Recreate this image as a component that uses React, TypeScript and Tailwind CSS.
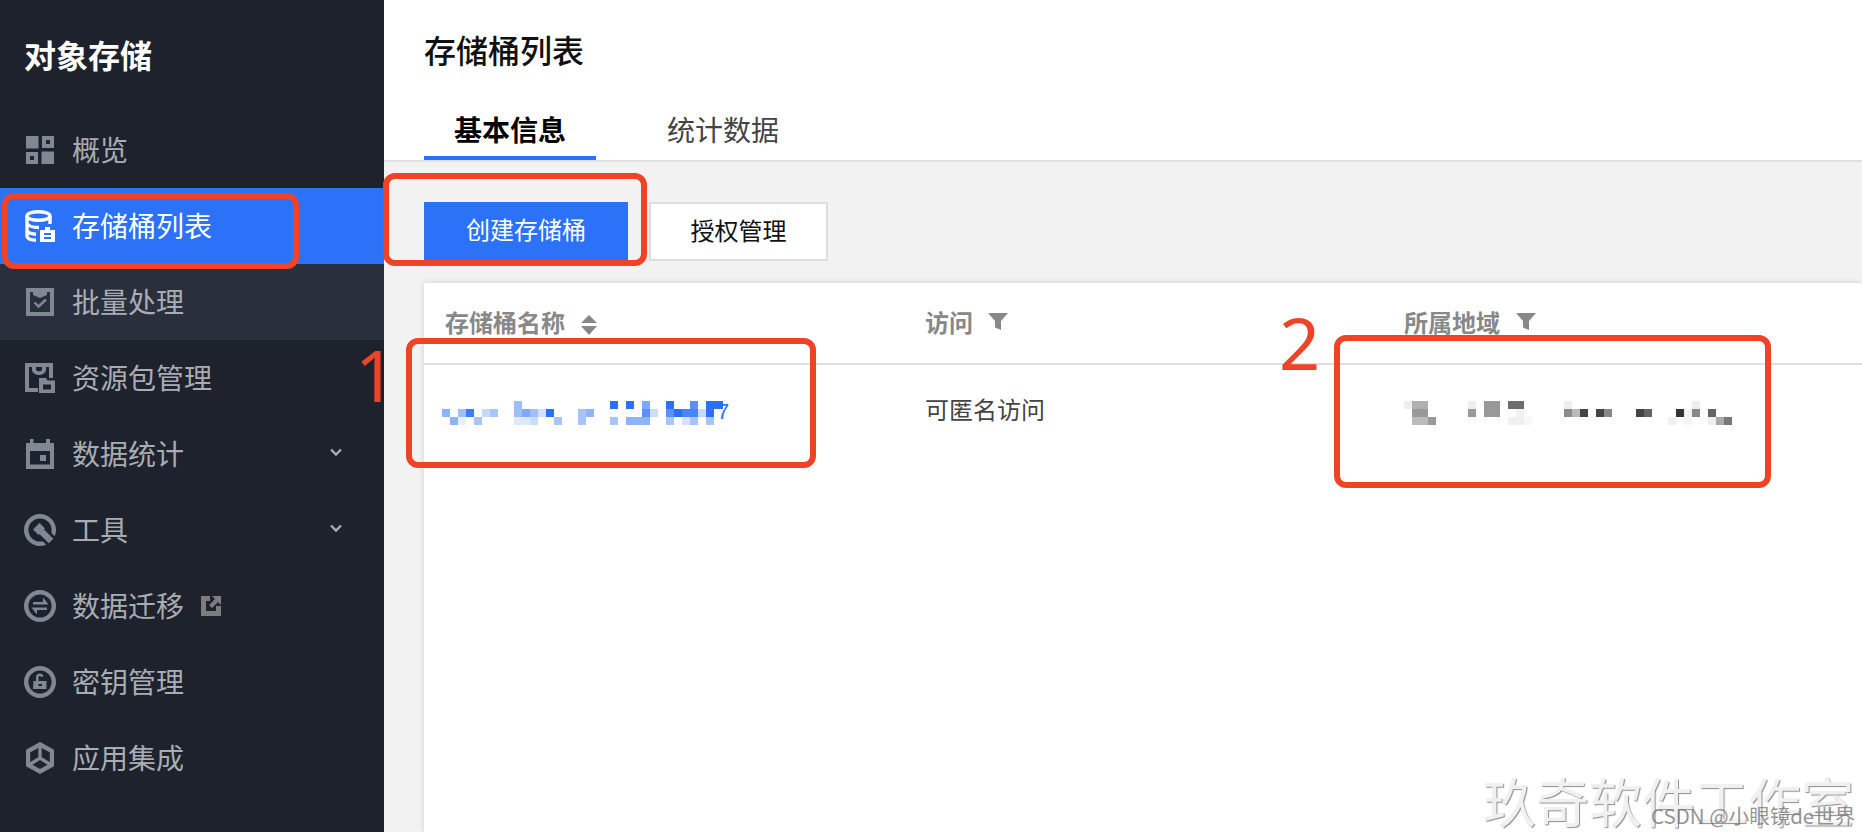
import type { ReactNode } from "react";

const cjk = { fontFamily: '"Noto Sans CJK SC", "Liberation Sans", sans-serif' };

type Cell = [number, number, number, string];

// mosaic cells: column x, row, width, colour (blurred-out bucket name / region)
const nameCells: Cell[] = [
  [72, 0, 8, "#9dbdfb"], [168, 0, 8, "#2a71f8"], [184, 0, 8, "#2a71f8"], [200, 0, 8, "#7fa8fa"],
  [224, 0, 8, "#2a71f8"], [248, 0, 8, "#5b8ff9"], [264, 0, 17, "#2a71f8"],
  [0, 1, 8, "#8fb4fb"], [16, 1, 8, "#a0bffb"], [24, 1, 8, "#3b7cf8"], [40, 1, 8, "#c8d9fd"], [48, 1, 8, "#a7c4fb"],
  [72, 1, 8, "#9dbdfb"], [80, 1, 8, "#7fa8fa"], [88, 1, 8, "#a0bffb"], [96, 1, 8, "#d5e2fd"], [104, 1, 8, "#2a71f8"],
  [136, 1, 8, "#a8c4fb"], [144, 1, 8, "#8fb4fb"], [200, 1, 8, "#5b8ff9"], [208, 1, 8, "#cddcfd"],
  [224, 1, 8, "#5b8ff9"], [232, 1, 8, "#2a71f8"], [240, 1, 16, "#4a84f9"], [256, 1, 8, "#c8d9fd"], [264, 1, 8, "#2a71f8"],
  [8, 2, 8, "#8fb4fb"], [16, 2, 8, "#e8f0fe"], [32, 2, 8, "#a7c4fb"],
  [72, 2, 16, "#dfe9fe"], [88, 2, 8, "#cddcfd"], [112, 2, 8, "#a7c4fb"],
  [136, 2, 8, "#a7c4fb"], [168, 2, 8, "#a7c4fb"], [184, 2, 24, "#8fb4fb"],
  [224, 2, 8, "#a7c4fb"], [240, 2, 8, "#d5e2fd"], [248, 2, 8, "#a7c4fb"], [264, 2, 8, "#a7c4fb"],
];

const regionCells: Cell[] = [
  [0, 0, 8, "#eeeeee"], [8, 0, 16, "#b0b0b0"], [64, 0, 8, "#eeeeee"], [80, 0, 16, "#999999"], [104, 0, 16, "#6d6d6d"],
  [160, 0, 8, "#eeeeee"], [288, 0, 8, "#eeeeee"],
  [8, 1, 16, "#999999"], [64, 1, 8, "#999999"], [80, 1, 16, "#999999"], [112, 1, 8, "#f2f2f2"],
  [160, 1, 8, "#8c8c8c"], [168, 1, 8, "#bbbbbb"], [176, 1, 8, "#444444"], [192, 1, 8, "#444444"], [200, 1, 8, "#888888"],
  [232, 1, 8, "#444444"], [240, 1, 8, "#666666"], [272, 1, 8, "#333333"], [280, 1, 8, "#f2f2f2"], [288, 1, 8, "#888888"], [304, 1, 8, "#666666"],
  [8, 2, 16, "#bbbbbb"], [24, 2, 8, "#999999"], [104, 2, 16, "#f0f0f0"], [120, 2, 8, "#f8f8f8"],
  [264, 2, 8, "#f0f0f0"], [280, 2, 8, "#f4f4f4"], [304, 2, 8, "#eeeeee"], [312, 2, 8, "#aaaaaa"], [320, 2, 8, "#777777"],
];

function Mosaic({ cells, width }: { cells: Cell[]; width: number }) {
  return (
    <svg width={width} height={24} viewBox={`0 0 ${width} 24`} className="block">
      {cells.map(([x, row, w, fill]) => (
        <rect key={`${x}-${row}`} x={x} y={row * 8} width={w} height={8} fill={fill} />
      ))}
    </svg>
  );
}

const OverviewIcon = () => (
  <svg width="28" height="28" viewBox="0 0 28 28" fill="#7f8893">
    <rect width="12.5" height="12.5" />
    <path fillRule="evenodd" d="M16 0h12v12H16zM20 4v4h4V4z" />
    <path fillRule="evenodd" d="M0 16h12v12H0zM4 20v4h4v-4z" />
    <rect x="15.5" y="15.5" width="12.5" height="12.5" />
  </svg>
);

const BucketIcon = () => (
  <svg width="30" height="32" viewBox="0 0 30 32" fill="none" stroke="#fff" strokeWidth="3.4">
    <ellipse cx="13.5" cy="6" rx="11.5" ry="4.3" />
    <path d="M2 6v20c0 2.500 4 4 9 4.200M25 6v8M2 13.500c1.500 2.500 6 4 12 4M2 21c1.500 2 4 3 9 3.300" />
    <path
      fillRule="evenodd"
      fill="#fff"
      stroke="none"
      d="M15 20h5v-3h5v3h5v12H15zM19 23v2h7v-2zM19 27v2h7v-2z"
    />
  </svg>
);

const BatchIcon = () => (
  <svg width="28" height="28" viewBox="0 0 28 28" fill="#7f8893">
    <path fillRule="evenodd" d="M0 0h28v28H0zM4 4v20h20V4h-3v3l-7 3-7-3V4z" />
    <path d="M8.500 14.500l4 4L20 11.500" fill="none" stroke="#7f8893" strokeWidth="2.400" />
  </svg>
);

const PackageIcon = () => (
  <svg width="30" height="30" viewBox="0 0 30 30" fill="#7f8893">
    <path d="M0 0h28v15h-4V4h-3v2.500c0 3-3 5.500-7 5.500S7 9.500 7 6.500V4H4v21h9v4H0z" />
    <path d="M11 4h6v2.500c0 1.200-1.500 1.800-3 1.800s-3-.6-3-1.800z" fill="#1e222d" />
    <path fillRule="evenodd" d="M14 15h7l1.500 2.500H30V30H14zM18 21.500v5h8v-5z" />
  </svg>
);

const CalendarIcon = () => (
  <svg width="28" height="30" viewBox="0 0 28 30" fill="#7f8893">
    <path fillRule="evenodd" d="M4 0h3.500v4h12.500V0h4v4h4v26H0V4h4zM4 12v13.500h20V12z" />
    <rect x="14" y="16" width="6" height="6" />
  </svg>
);

const ToolIcon = () => (
  <svg width="32" height="32" viewBox="0 0 32 32">
    <circle cx="16" cy="16" r="13.800" fill="none" stroke="#7f8893" strokeWidth="4.400" />
    <path d="M19 19L30 30" stroke="#1e222d" strokeWidth="12" />
    <path d="M15 15L27 27" stroke="#7f8893" strokeWidth="6.500" />
    <path d="M7.500 17.500L17.500 7.500l5 5L12.500 22.500z" fill="#1e222d" />
    <path d="M9 15.500L15.500 9l5.500 5.500-6.500 6.500z" fill="#7f8893" />
  </svg>
);

const MigrateIcon = () => (
  <svg width="32" height="32" viewBox="0 0 32 32" fill="#7f8893">
    <circle cx="16" cy="16" r="13.800" fill="none" stroke="#7f8893" strokeWidth="4.400" />
    <path d="M9 12h10V7.500l5.500 7H9z" />
    <path d="M7.500 17.500H23v2.500H13v4.500z" />
  </svg>
);

const KeyIcon = () => (
  <svg width="32" height="32" viewBox="0 0 32 32" fill="#7f8893">
    <circle cx="16" cy="16" r="13.800" fill="none" stroke="#7f8893" strokeWidth="4.400" />
    <path fillRule="evenodd" d="M9.500 15H12V11a3.800 3.800 0 0 1 7.500-.5l-2.500.5a1.300 1.300 0 0 0-2.500 0v4h8v8h-13.500zM14.500 18v2h3.500v-2z" />
  </svg>
);

const CubeIcon = () => (
  <svg width="28" height="32" viewBox="0 0 28 32" fill="none" stroke="#7f8893">
    <path d="M14 2.500l12 6.700v13.600l-12 6.700-12-6.700V9.200z" strokeWidth="4.400" />
    <path d="M14 3v13M14 16L3 23M14 16l11 7" strokeWidth="3.400" />
  </svg>
);

const ExternalIcon = () => (
  <svg width="20" height="20" viewBox="0 0 20 20" fill="#7d7d7d">
    <path d="M0 0h9v5H5v10h10v-5h5v10H0z" />
    <path d="M11 0h9v9l-3-3-6 6-3-3 6-6z" />
  </svg>
);

const Chevron = () => (
  <svg width="12" height="9" viewBox="0 0 12 9" fill="none" stroke="#a9adb3" strokeWidth="2.400" className="block">
    <path d="M1 1.500l5 5 5-5" />
  </svg>
);

const FilterIcon = () => (
  <svg width="20" height="18" viewBox="0 0 20 18" fill="#888">
    <path d="M0 0h20l-7 8v9l-6-2.500V8z" />
  </svg>
);

const SortIcon = () => (
  <svg width="16" height="20" viewBox="0 0 16 20" fill="#888" className="mt-[5px]">
    <path d="M8 0l8 8H0zM0 11h16l-8 9z" />
  </svg>
);

type NavEntry = { label: string; icon: ReactNode; active?: boolean; hover?: boolean; chevron?: boolean; external?: boolean };

const navItems: NavEntry[] = [
  { label: "概览", icon: <OverviewIcon /> },
  { label: "存储桶列表", icon: <BucketIcon />, active: true },
  { label: "批量处理", icon: <BatchIcon />, hover: true },
  { label: "资源包管理", icon: <PackageIcon /> },
  { label: "数据统计", icon: <CalendarIcon />, chevron: true },
  { label: "工具", icon: <ToolIcon />, chevron: true },
  { label: "数据迁移", icon: <MigrateIcon />, external: true },
  { label: "密钥管理", icon: <KeyIcon /> },
  { label: "应用集成", icon: <CubeIcon /> },
];

function NavItem({ item }: { item: NavEntry }) {
  const bg = item.active ? "bg-[#2b72f8] text-white" : item.hover ? "bg-[#292f3c] text-[#a9adb3]" : "text-[#a9adb3]";
  return (
    <div className={`flex h-[76px] items-center pl-[24px] pr-[42px] text-[28px] leading-[36px] ${bg}`}>
      <span className="flex w-[32px] justify-center">{item.icon}</span>
      <span className="ml-[16px] pb-[2px]">{item.label}</span>
      {item.external && (
        <span className="ml-[17px]">
          <ExternalIcon />
        </span>
      )}
      {item.chevron && (
        <span className="ml-auto pb-[4px]">
          <Chevron />
        </span>
      )}
    </div>
  );
}

function HeaderCell({ label, icon, gap }: { label: string; icon: ReactNode; gap: string }) {
  return (
    <div className={`flex h-[80px] items-center pb-[2px] pl-[21px] text-[24px] font-bold leading-[32px] text-[#888] ${gap}`}>
      <span>{label}</span>
      {icon}
    </div>
  );
}

export default function App() {
  return (
    <div className="relative flex h-[832px] w-full overflow-hidden bg-white" style={cjk}>
      <aside className="w-[384px] shrink-0 bg-[#1e222d]">
        <div className="flex h-[112px] items-center pb-[4px] pl-[24px] text-[32px] font-bold leading-[40px] text-white">
          对象存储
        </div>
        {navItems.map((item) => (
          <NavItem key={item.label} item={item} />
        ))}
      </aside>

      <main className="flex min-w-0 flex-1 flex-col">
        <header className="h-[162px] shrink-0 border-b-2 border-[#dfdfdf] pl-[40px]">
          <h1 className="pt-[28px] text-[32px] font-medium leading-[42px] text-[#111]">存储桶列表</h1>
          <div className="mt-[36px] flex">
            <div className="flex h-[54px] w-[172px] items-center justify-center border-b-4 border-[#2b72f8] pb-[4px] text-[28px] font-bold leading-[36px] text-black">
              基本信息
            </div>
            <div className="ml-[71px] flex h-[54px] items-center pb-[8px] text-[28px] leading-[36px] text-[#444]">
              统计数据
            </div>
          </div>
        </header>

        <section className="flex flex-1 flex-col bg-[#f2f2f2] pl-[40px] pt-[40px]">
          <div className="flex items-start">
            <button className="flex h-[58px] w-[204px] items-center justify-center bg-[#2b72f8] pb-[4px] text-[24px] leading-[32px] text-white">
              创建存储桶
            </button>
            <button className="ml-[21px] flex h-[59px] w-[179px] items-center justify-center border-2 border-[#dedede] bg-white pb-[4px] text-[24px] leading-[32px] text-[#111]">
              授权管理
            </button>
          </div>

          <div className="mt-[22px] flex-1 bg-white shadow-[0_0_6px_rgba(0,0,0,0.14)]">
            <div className="grid grid-cols-[480px_479px_1fr] border-b-2 border-[#dfdfdf]">
              <HeaderCell label="存储桶名称" gap="gap-[16px]" icon={<SortIcon />} />
              <HeaderCell label="访问" gap="gap-[15px]" icon={<FilterIcon />} />
              <HeaderCell label="所属地域" gap="gap-[16px]" icon={<FilterIcon />} />
            </div>
            <div className="grid grid-cols-[480px_479px_1fr] items-start">
              <div className="relative pl-[18px] pt-[36px]">
                <Mosaic cells={nameCells} width={290} />
                <span className="absolute left-[293px] top-[37px] text-[22px] leading-[20px] text-[#2b72f8] [font-family:'Liberation_Sans',sans-serif]">
                  7
                </span>
              </div>
              <div className="pl-[21px] pt-[28px] text-[24px] leading-[32px] text-[#444]">可匿名访问</div>
              <div className="pl-[21px] pt-[36px]">
                <Mosaic cells={regionCells} width={330} />
              </div>
            </div>
          </div>
        </section>
      </main>

      {/* red annotations drawn on top of the screenshot */}
      <div className="absolute left-[2px] top-[193px] h-[76px] w-[297px] rounded-[12px] border-[6px] border-[#ee4326]" />
      <div className="absolute left-[383px] top-[173px] h-[93px] w-[264px] rounded-[12px] border-[6px] border-[#ee4326]" />
      <div className="absolute left-[406px] top-[338px] h-[130px] w-[410px] rounded-[12px] border-[6px] border-[#ee4326]" />
      <div className="absolute left-[1334px] top-[335px] h-[153px] w-[437px] rounded-[12px] border-[6px] border-[#ee4326]" />
      <span className="absolute left-[355px] top-[332px] text-[72px] leading-[84px] text-[#ee4326] [font-family:'Noto_Sans',sans-serif]">
        1
      </span>
      <span className="absolute left-[1279px] top-[300px] text-[72px] leading-[84px] text-[#ee4326] [font-family:'Noto_Sans',sans-serif]">
        2
      </span>

      {/* watermarks */}
      <span className="absolute left-[1483px] top-[770px] whitespace-nowrap text-[53px] leading-[60px] text-[#f0f0f0] [text-shadow:1px_1px_1px_rgba(0,0,0,0.45)]">
        玖奇软件工作室
      </span>
      <span className="absolute left-[1651px] top-[801px] whitespace-nowrap text-[20.5px] leading-[28px] text-[#777]/80">
        CSDN @小眼镜de世界
      </span>
    </div>
  );
}
